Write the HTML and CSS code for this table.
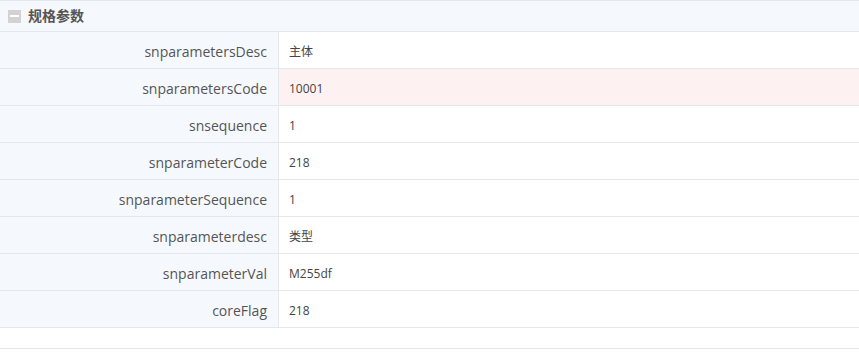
FILE: index.html
```html
<!DOCTYPE html>
<html lang="zh">
<head>
<meta charset="utf-8">
<link rel="stylesheet" href="styles.css">
</head>
<body>
<div class="panel">
  <div class="panel-head">
    <span class="toggle"><span class="bar"></span></span>
    <span class="title">规格参数</span>
  </div>
  <div class="rows">
    <div class="row"><div class="label">snparametersDesc</div><div class="value">主体</div></div>
    <div class="row hl"><div class="label">snparametersCode</div><div class="value">10001</div></div>
    <div class="row"><div class="label">snsequence</div><div class="value">1</div></div>
    <div class="row"><div class="label">snparameterCode</div><div class="value">218</div></div>
    <div class="row"><div class="label">snparameterSequence</div><div class="value">1</div></div>
    <div class="row"><div class="label">snparameterdesc</div><div class="value">类型</div></div>
    <div class="row"><div class="label">snparameterVal</div><div class="value">M255df</div></div>
    <div class="row"><div class="label">coreFlag</div><div class="value">218</div></div>
  </div>
  <div class="footer"></div>
</div>
</body>
</html>
```
FILE: styles.css
```css
html, body {
  margin: 0;
  padding: 0;
  background: #ffffff;
}
body {
  font-family: "Open Sans", "Noto Sans CJK SC", sans-serif;
  color: #333333;
}
.panel {
  width: 859px;
}
.panel-head {
  height: 30px;
  border-top: 1px solid #e3e6ea;
  border-bottom: 1px solid #e3e6ea;
  background: #f5f8fc;
  display: flex;
  align-items: center;
  padding-left: 8px;
  gap: 7px;
}
.toggle {
  width: 13px;
  height: 13px;
  background: #d2d2d2;
  display: flex;
  align-items: center;
  justify-content: center;
}
.toggle .bar {
  width: 9px;
  height: 2px;
  background: #ffffff;
}
.title {
  font-family: "Noto Sans CJK SC", sans-serif;
  font-weight: bold;
  font-size: 14px;
  line-height: 16px;
  padding-bottom: 3px;
  color: #555555;
}
.row {
  display: flex;
  height: 36px;
  border-bottom: 1px solid #e5e7ea;
}
.label {
  width: 267px;
  flex: none;
  background: #f5f9fd;
  border-right: 1px solid #e5e7ea;
  padding-right: 11px;
  padding-top: 3px;
  text-align: right;
  font-size: 14px;
  line-height: 33px;
  color: #555555;
}
.value {
  flex: 1;
  padding-left: 10px;
  padding-top: 3px;
  font-size: 12px;
  line-height: 33px;
  color: #444444;
}
.row.hl .value {
  background: #fdf2f1;
}
.footer {
  height: 20px;
  border-bottom: 1px solid #e5e7ea;
}
```
